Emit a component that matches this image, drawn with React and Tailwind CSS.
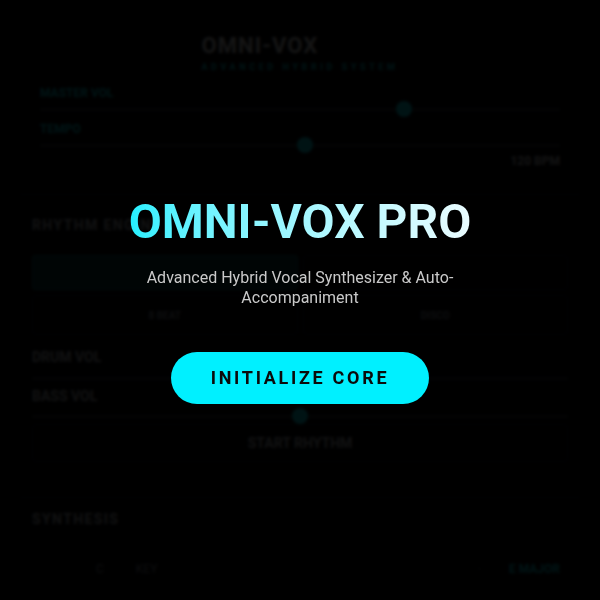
import { useState } from "react";

const Slider = ({ value }) => (
  <div className="relative h-4 flex items-center">
    <div className="h-[3px] w-full bg-[#2a2f38] rounded-full" />
    <div
      className="absolute w-4 h-4 rounded-full bg-[#00f0ff] -translate-x-1/2"
      style={{ left: `${value}%` }}
    />
  </div>
);

const App = () => {
  const [ready, setReady] = useState(false);

  return (
    <div className="relative h-screen bg-[#050608] text-white font-['Roboto','Liberation_Sans',sans-serif] overflow-hidden">
      {/* main synth ui (behind the splash) */}
      <div className="px-5 pt-8">
        <div className="flex justify-center">
          <div className="flex flex-col items-start">
            <h1 className="text-[22px] leading-7 font-bold tracking-wider">OMNI-VOX</h1>
            <p className="text-[9px] leading-[14px] tracking-[0.4em] text-[#00f0ff] font-bold">
              ADVANCED HYBRID SYSTEM
            </p>
          </div>
        </div>

        <div className="mt-[11px] px-5 flex flex-col">
          <span className="text-xs leading-4 font-bold text-[#00f0ff]">MASTER VOL</span>
          <Slider value={70} />
          <span className="text-xs leading-4 font-bold text-[#00f0ff] mt-1">TEMPO</span>
          <Slider value={51} />
          <span className="self-end text-xs leading-4 font-bold text-gray-200">120 BPM</span>
        </div>

        <div className="mt-[25px] border-t border-[#1c2028] px-3 pt-5">
          <h2 className="text-sm leading-5 font-bold tracking-widest text-gray-300">RHYTHM ENGINE</h2>
          <div className="grid grid-cols-2 gap-[5px] mt-5">
            <div className="h-[35px] rounded bg-[#00f0ff]/25 border border-[#00f0ff]/30" />
            <div className="h-[35px] rounded border border-[#1c2028]" />
            <button className="h-10 rounded border border-[#1c2028] text-[10px] font-bold text-gray-400">8 BEAT</button>
            <button className="h-10 rounded border border-[#1c2028] text-[10px] font-bold text-gray-400">DISCO</button>
          </div>
          <div className="flex flex-col mt-3">
            <span className="text-sm leading-5 font-bold text-gray-300">DRUM VOL</span>
            <div className="mt-[3px]">
              <Slider value={50} />
            </div>
            <span className="text-sm leading-5 font-bold text-gray-300">BASS VOL</span>
            <div className="mt-[2px]">
              <Slider value={50} />
            </div>
          </div>
          <button className="w-full h-[38px] rounded border border-[#1c2028] text-sm font-bold text-gray-300">
            START RHYTHM
          </button>
        </div>

        <div className="mt-[35px] border-t border-[#1c2028] px-3 pt-[11px]">
          <h2 className="text-sm leading-5 font-bold tracking-widest text-gray-300">SYNTHESIS</h2>
          <div className="flex items-center justify-between mt-8 px-2">
            <div className="flex gap-8 pl-14 text-xs leading-4 text-gray-400">
              <span>C</span>
              <span>KEY</span>
            </div>
            <div className="flex gap-7 items-center text-xs leading-4">
              <span className="text-gray-500">·</span>
              <span className="font-bold text-[#00f0ff]">E MAJOR</span>
            </div>
          </div>
        </div>
      </div>

      {/* splash overlay */}
      {!ready && (
        <div className="fixed inset-0 bg-black/[0.92] backdrop-blur-[1.5px] flex flex-col items-center justify-center text-center pb-[5px]">
          <h1 className="text-5xl font-bold bg-gradient-to-r from-[#1ff0ff] to-[#eafcff] bg-clip-text text-transparent leading-tight">
            OMNI-VOX PRO
          </h1>
          <p className="mt-4 max-w-[320px] text-base leading-5 text-[#c9c9c9]">
            Advanced Hybrid Vocal Synthesizer &amp; Auto-Accompaniment
          </p>
          <button
            onClick={() => setReady(true)}
            className="mt-11 px-10 py-3 rounded-full bg-[#00f0ff] text-[#0b0b0b] text-lg font-bold tracking-[0.15em]"
          >
            INITIALIZE CORE
          </button>
        </div>
      )}
    </div>
  );
};

export default App;
